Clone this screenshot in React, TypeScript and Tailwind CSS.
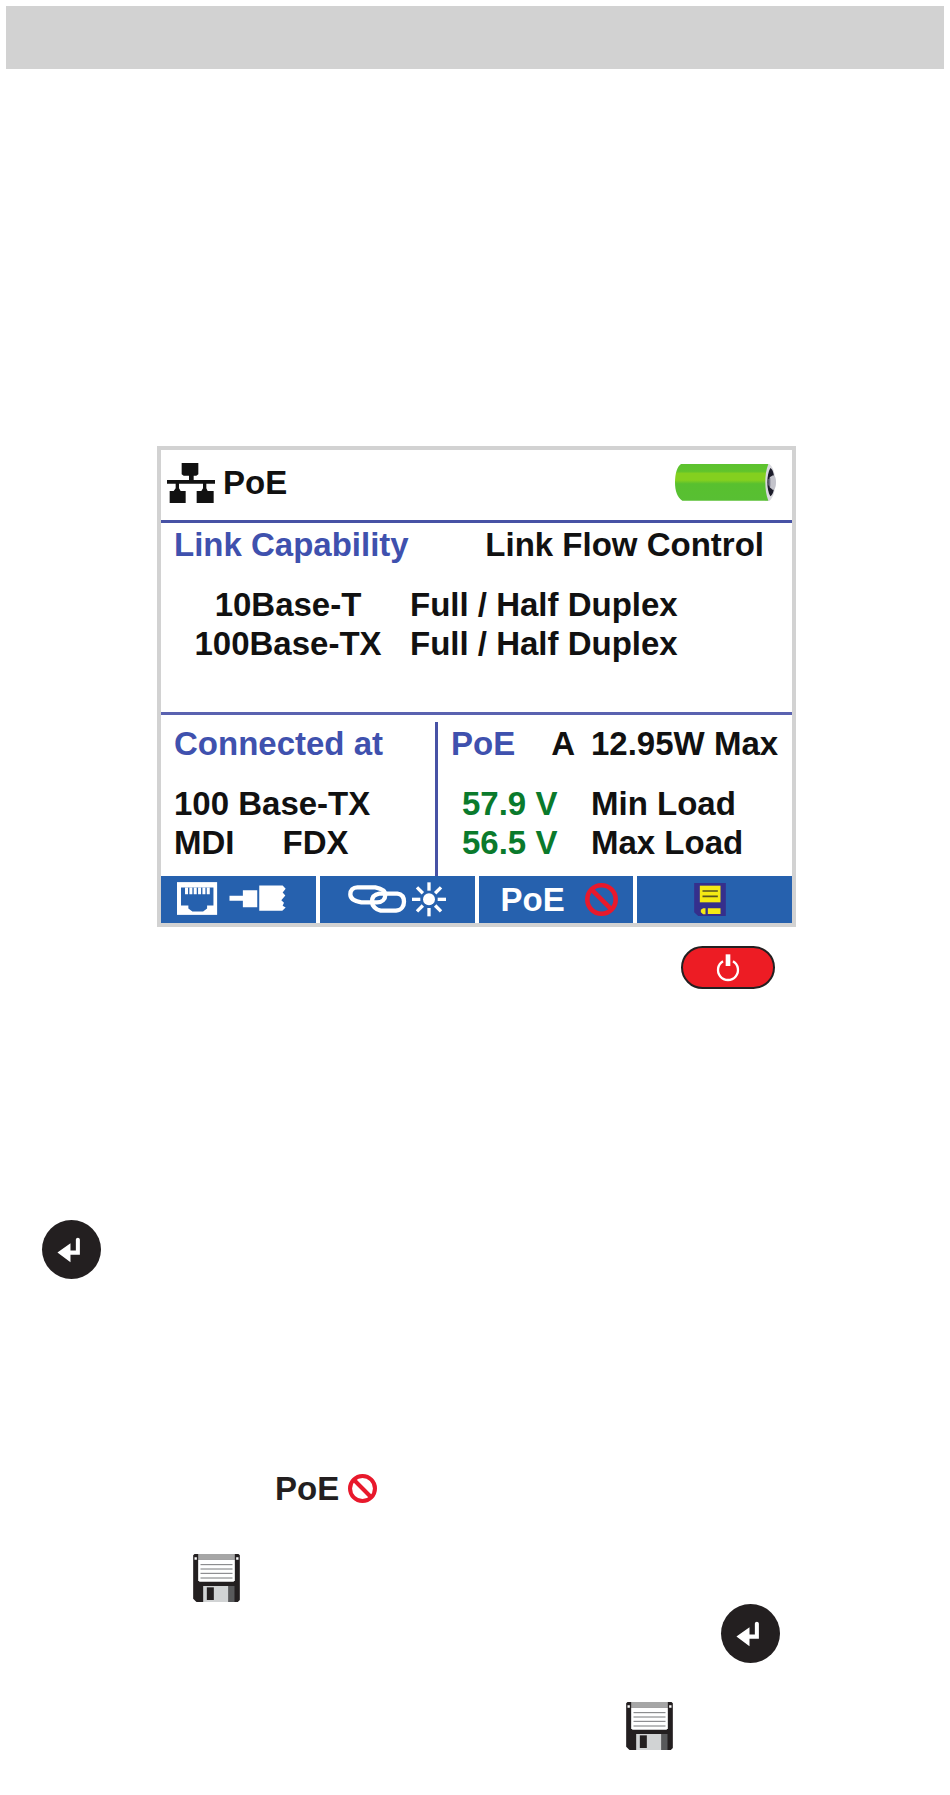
import type { ReactNode } from 'react';

const LINK_MODES = [
  { name: '10Base-T', flow: 'Full / Half Duplex' },
  { name: '100Base-TX', flow: 'Full / Half Duplex' },
];

const POE_LOADS = [
  { voltage: '57.9 V', load: 'Min Load' },
  { voltage: '56.5 V', load: 'Max Load' },
];

const SUN_RAYS = [0, 45, 90, 135, 180, 225, 270, 315];

function NetworkIcon() {
  return (
    <svg viewBox="0 0 144 120" className="h-[40px] w-[48px]" fill="#111111" aria-hidden="true">
      <path d="M44 0h50v34l-6 4h-8v13h64v11h-26v14l4 8h18v36H89V84h14l5-8V62H36v14l5 8h15v36H8V84h12l6-8V62H0V51h66V38h-16l-6-4z" />
    </svg>
  );
}

function BatteryIcon() {
  return (
    <svg viewBox="0 0 303 111" className="h-[37px] w-[101px]" role="img" aria-label="Battery full">
      <defs>
        <linearGradient id="cell" x1="0" y1="0" x2="0" y2="1">
          <stop offset="0" stopColor="#5cc22f" />
          <stop offset="0.2" stopColor="#60c42c" />
          <stop offset="0.26" stopColor="#84d01f" />
          <stop offset="0.44" stopColor="#84d01f" />
          <stop offset="0.54" stopColor="#58c02f" />
          <stop offset="1" stopColor="#58bf33" />
        </linearGradient>
      </defs>
      <path d="M270 1h14c10 8 17 28 17 54s-7 47-17 55h-14z" fill="#d9d9de" />
      <path d="M18 0h262c-7 18-9 36-9 55s2 38 9 55H22C6 100 0 80 0 55S6 8 18 0z" fill="url(#cell)" />
      <path d="M286 12c8 4 12 20 12 43s-4 38-12 42c-6-10-9-26-9-42s3-33 9-43z" fill="#1d1d2b" />
      <path d="M284 40l10-6c6 0 9 10 9 21s-3 23-9 23l-10-8z" fill="#c3c3cb" />
      <path d="M280 46l6-4v26l-6-4z" fill="#77778a" />
    </svg>
  );
}

function CableIcon() {
  return (
    <svg viewBox="0 0 326 104" className="h-[35px] w-[109px]" fill="#ffffff" aria-hidden="true">
      <rect width="120" height="98" />
      <path d="M12 16h97v54H90v9L78 88H46L34 79v-9H12z" fill="#2661ae" />
      <path d="M24 16h9v20h-9zM37 16h9v20h-9zM50 16h9v20h-9zM63 16h9v20h-9zM76 16h9v20h-9zM89 16h9v20h-9z" />
      <path d="M157 41h40V24h43v51h-43V56h-40zM246 10h70l9 10-9 11 8 9-12 14 8 8-4 9 9 5-10 10h-69z" />
    </svg>
  );
}

function LinkLightIcon() {
  return (
    <svg viewBox="0 0 297 105" className="h-[35px] w-[99px]" fill="none" stroke="#ffffff" aria-hidden="true">
      <g strokeWidth="13" strokeLinejoin="round">
        <path d="M28 16h54c16 3 30 10 30 22 0 13-10 23-25 23H40C20 58 7 49 7 37s8-21 21-21z" />
        <path d="M94 35h54c14 2 20 12 20 24s-7 25-24 27H98c-14-3-26-14-26-27s8-22 22-24z" />
      </g>
      <circle cx="243" cy="52" r="18" fill="#ffffff" stroke="none" />
      {SUN_RAYS.map(angle => (
        <path key={angle} d="M243 26V1" strokeWidth="10" transform={`rotate(${angle} 243 52)`} />
      ))}
    </svg>
  );
}

function ProhibitedIcon({ className }: { className: string }) {
  return (
    <svg viewBox="0 0 100 100" className={className} fill="none" stroke="#e8192c" strokeWidth="14" aria-hidden="true">
      <circle cx="50" cy="50" r="43" />
      <path d="M20 20l60 60" />
    </svg>
  );
}

function YellowDiskIcon() {
  return (
    <svg viewBox="0 0 95 99" className="h-[33px] w-[32px]" aria-hidden="true">
      <path d="M0 0h95v99H12L0 88z" fill="#352f8c" />
      <path d="M17 8h62v50H17z" fill="#f5ea14" />
      <path d="M25 24h46M25 40h46" stroke="#57531f" strokeWidth="5" />
      <path d="M20 80l7-4h7v18h-7l-7-6zM41 76h38v17H41z" fill="#f5ea14" />
    </svg>
  );
}

function DiskIcon() {
  return (
    <svg viewBox="0 0 140 144" className="h-[48px] w-[47px]" role="img" aria-label="Save">
      <path d="M4 0h132l4 4v134l-6 6H10L0 134V4z" fill="#231f20" />
      <path d="M15 0h110v17H15z" fill="#a6a6a6" />
      <path d="M15 17h110v62l-4 4H19l-4-4z" fill="#ffffff" />
      <path d="M22 32h96M22 45h96M22 58h96M22 72h96" stroke="#77787b" strokeWidth="3" />
      <path d="M4 10h7v7H4zM129 10h7v7h-7z" fill="#ffffff" />
      <path d="M30 96h76v48H30z" fill="#d1d3d4" />
      <path d="M106 96h18v48h-18z" fill="#58595b" />
      <path d="M41 100h21v38H41z" fill="#231f20" />
    </svg>
  );
}

function SoftKey({ label, className, children }: { label: string; className: string; children: ReactNode }) {
  return (
    <button
      type="button"
      aria-label={label}
      className={`flex h-[47px] items-center bg-[#2661ae] text-white ${className}`}
    >
      {children}
    </button>
  );
}

function EnterKey() {
  return (
    <button type="button" aria-label="Enter" className="block size-[59px] rounded-full bg-[#231f20]">
      <svg viewBox="0 0 176 176" className="size-full" fill="#ffffff" aria-hidden="true">
        <path d="M46 97l39-28v22h16V59c0-8 12-8 12 0v45H85v22z" />
      </svg>
    </button>
  );
}

function PowerKey() {
  return (
    <button
      type="button"
      aria-label="Power"
      className="flex h-[43px] w-[94px] items-center justify-center rounded-full border-2 border-[#231f20] bg-[#ed1c24]"
    >
      <svg viewBox="0 0 72 84" className="h-[28px] w-[24px]" fill="none" stroke="#ffffff" aria-hidden="true">
        <path d="M21 22a30 30 0 1 0 30 0" strokeWidth="7" />
        <path d="M36 1v35" strokeWidth="14" />
      </svg>
    </button>
  );
}

function TesterScreen() {
  return (
    <section className="w-full border-4 border-[#d2d2d2] bg-white whitespace-nowrap text-[#111111]">
      <header className="flex h-[73px] items-center justify-between border-b-[3px] border-[#4752a5] pr-4 pb-[5px] pl-[6px]">
        <div className="flex items-center gap-2">
          <NetworkIcon />
          <h1>PoE</h1>
        </div>
        <BatteryIcon />
      </header>

      <div className="border-b-[3px] border-[#5a62b0] pt-[2px] pb-[49px] pl-[13px]">
        <div className="flex justify-between pr-7">
          <h2 className="text-[#3f51ae]">Link Capability</h2>
          <h2>Link Flow Control</h2>
        </div>
        <table className="mt-[21px]">
          <tbody>
            {LINK_MODES.map(({ name, flow }) => (
              <tr key={name}>
                <td className="w-[228px] p-0 text-center">{name}</td>
                <td className="py-0 pr-0 pl-2">{flow}</td>
              </tr>
            ))}
          </tbody>
        </table>
      </div>

      <div className="flex pt-[7px]">
        <div className="w-[274px] pt-[2px] pb-[14px] pl-[13px]">
          <h2 className="text-[#3f51ae]">Connected at</h2>
          <p className="mt-[21px]">100 Base-TX</p>
          <p className="flex gap-12">
            <span>MDI</span>
            <span>FDX</span>
          </p>
        </div>
        <div className="flex-1 border-l-[3px] border-[#4752a5] pt-[2px] pb-[14px] pl-[13px]">
          <div className="flex">
            <div className="flex w-[140px] justify-between pr-4">
              <h2 className="text-[#3f51ae]">PoE</h2>
              <span>A</span>
            </div>
            <span>12.95W Max</span>
          </div>
          <table className="mt-[21px]">
            <tbody>
              {POE_LOADS.map(({ voltage, load }) => (
                <tr key={load}>
                  <td className="w-[140px] py-0 pr-0 pl-[11px] text-[#0a7a2c]">{voltage}</td>
                  <td className="p-0">{load}</td>
                </tr>
              ))}
            </tbody>
          </table>
        </div>
      </div>

      <nav className="grid grid-cols-4 gap-[4px]">
        <SoftKey label="Cable test" className="pl-4">
          <CableIcon />
        </SoftKey>
        <SoftKey label="Link light" className="justify-center">
          <LinkLightIcon />
        </SoftKey>
        <SoftKey label="PoE off" className="gap-5 pl-[22px]">
          <span>PoE</span>
          <ProhibitedIcon className="size-[33px]" />
        </SoftKey>
        <SoftKey label="Save" className="justify-center pr-[10px]">
          <YellowDiskIcon />
        </SoftKey>
      </nav>
    </section>
  );
}

function App() {
  return (
    <div className="bg-white pt-[6px] font-['Liberation_Sans',Arial,sans-serif] text-[33px] leading-[39px] font-bold">
      <div className="mx-[6px] h-[63px] bg-[#d2d2d2]" />
      <main className="pt-[377px] pr-[6px] pb-[43px] pl-[9px]">
        <div className="mx-auto max-w-[639px]">
          <TesterScreen />
          <div className="mt-[19px] flex justify-end pr-[21px]">
            <PowerKey />
          </div>
        </div>
        <div className="mt-[231px] pl-[33px]">
          <EnterKey />
        </div>
        <p className="mt-[190px] flex items-center gap-[9px] pl-[266px] text-[#231f20]">
          PoE
          <ProhibitedIcon className="size-[29px]" />
        </p>
        <div className="mt-[46px] pl-[184px]">
          <DiskIcon />
        </div>
        <div className="mt-[2px] flex justify-end pr-[164px]">
          <EnterKey />
        </div>
        <div className="mt-[39px] flex justify-end pr-[271px]">
          <DiskIcon />
        </div>
      </main>
    </div>
  );
}

export default App;
